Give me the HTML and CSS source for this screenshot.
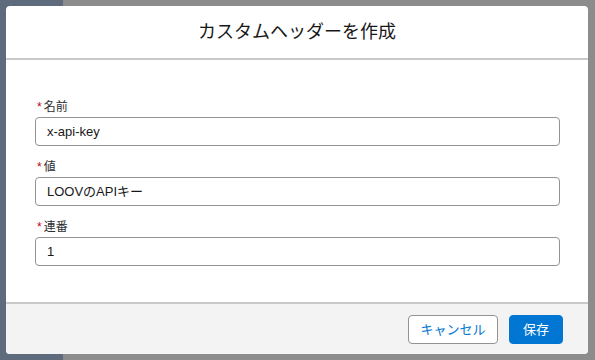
FILE: index.html
```html
<!DOCTYPE html>
<html lang="ja">
<head>
<meta charset="utf-8">
<link rel="stylesheet" href="styles.css">
</head>
<body>
<div class="modal">
  <header class="modal-header">
    <h2 class="title">カスタムヘッダーを作成</h2>
  </header>
  <div class="modal-body">
    <div class="field">
      <label class="label"><abbr class="req">*</abbr>名前</label>
      <div class="input">x-api-key</div>
    </div>
    <div class="field">
      <label class="label"><abbr class="req">*</abbr>値</label>
      <div class="input">LOOVのAPIキー</div>
    </div>
    <div class="field">
      <label class="label"><abbr class="req">*</abbr>連番</label>
      <div class="input">1</div>
    </div>
  </div>
  <footer class="modal-footer">
    <button class="btn btn-neutral">キャンセル</button>
    <button class="btn btn-brand">保存</button>
  </footer>
</div>
</body>
</html>
```
FILE: styles.css
```css
* { box-sizing: border-box; }
html, body { margin: 0; height: 100%; }
body {
  background: linear-gradient(to right, #5d6b7c 0, #5d6b7c 63px, #8c8c8c 63px);
  padding: 6px 7px 6px 6px;
  font-family: "Liberation Sans", "Noto Sans CJK JP", sans-serif;
  color: #181818;
}
.modal {
  width: 582px;
  height: 348px;
  background: #fff;
  border-radius: 4px;
  display: flex;
  flex-direction: column;
  overflow: hidden;
}
.modal-header {
  height: 54px;
  border-bottom: 2px solid #c9c9c9;
  display: flex;
  align-items: center;
  justify-content: center;
}
.title {
  margin: 0;
  font-size: 18px;
  font-weight: 400;
  line-height: 1.25;
  color: #181818;
  padding-top: 1px;
}
.modal-body {
  flex: 1;
  padding: 38px 28px 0 29px;
  display: flex;
  flex-direction: column;
  gap: 12px;
}
.field { display: flex; flex-direction: column; }
.label {
  font-size: 12px;
  line-height: 18px;
  margin-bottom: 1px;
  padding-left: 2px;
  color: #2e2e2e;
}
.req {
  color: #ba0517;
  text-decoration: none;
  margin-right: 2px;
  font-size: 12px;
}
.input {
  height: 29px;
  border: 1px solid #939393;
  border-radius: 4px;
  padding: 0 11px;
  font-size: 13px;
  line-height: 27px;
  color: #181818;
}
.modal-footer {
  height: 52px;
  background: #f3f3f3;
  border-top: 2px solid #c9c9c9;
  display: flex;
  justify-content: flex-end;
  align-items: center;
  gap: 11px;
  padding: 0 25px 0 0;
}
.btn {
  height: 29px;
  border-radius: 4px;
  font-family: inherit;
  font-size: 13px;
  padding: 0;
  line-height: 27px;
  white-space: nowrap;
  text-align: center;
}
.btn-neutral {
  width: 90px;
  background: #fff;
  border: 1px solid #939393;
  color: #0176d3;
}
.btn-brand {
  width: 54px;
  background: #0176d3;
  border: 1px solid #0176d3;
  color: #fff;
}
```
